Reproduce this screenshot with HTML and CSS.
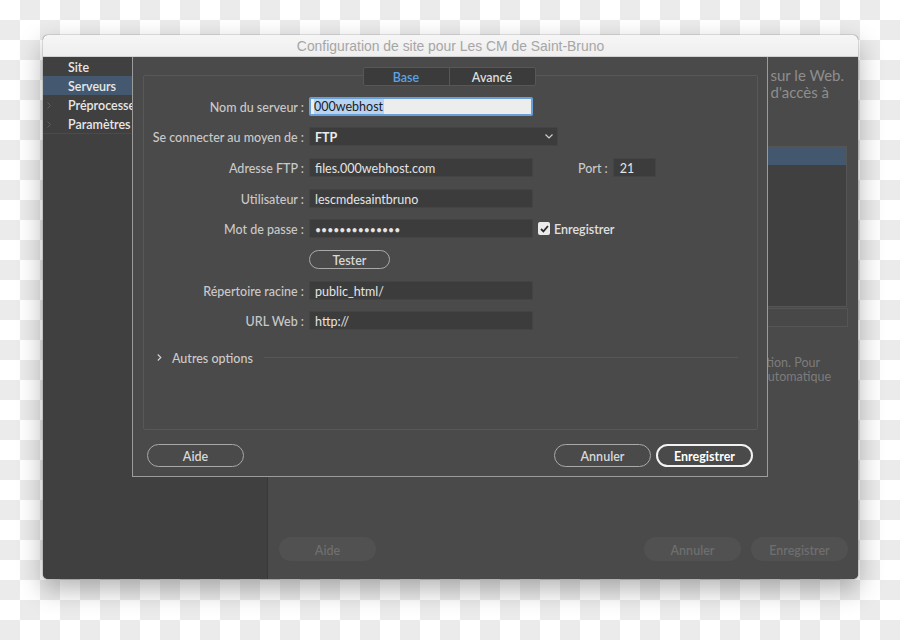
FILE: index.html
```html
<!DOCTYPE html>
<html lang="fr">
<head>
<meta charset="utf-8">
<title>Configuration de site</title>
<link rel="stylesheet" href="styles.css">
</head>
<body>
<div class="stage">
  <div class="window">
    <div class="titlebar">Configuration de site pour Les CM de Saint-Bruno</div>
    <div class="win-body">
      <aside class="cats">
        <div class="cat"><span class="chev"></span>Site</div>
        <div class="cat sel"><span class="chev"></span>Serveurs</div>
        <div class="cat"><span class="chev"><svg width="4" height="7" viewBox="0 0 4 7"><polyline points="0.5,0.5 3.5,3.5 0.5,6.5" fill="none" stroke="#5f5f5f" stroke-width="1"/></svg></span>Préprocesseurs CSS</div>
        <div class="cat last"><span class="chev"><svg width="4" height="7" viewBox="0 0 4 7"><polyline points="0.5,0.5 3.5,3.5 0.5,6.5" fill="none" stroke="#5f5f5f" stroke-width="1"/></svg></span>Paramètres</div>
      </aside>
      <section class="servers">
        <div class="intro">
          <div class="l1">qui héberge vos pages&nbsp; sur le Web.</div>
          <div class="l2">votre fournisseur&nbsp; d'accès à</div>
        </div>
        <div class="srv-list">
          <div class="srv-row sel"></div>
        </div>
        <div class="srv-tools"></div>
        <div class="note">
          <div class="n1">besoin de serveur pour la création. Pour</div>
          <div class="n2">le serveur est sélectionné automatique</div>
        </div>
        <div class="win-buttons">
          <span class="ghost-btn">Aide</span>
          <span class="spacer"></span>
          <span class="ghost-btn">Annuler</span>
          <span class="ghost-btn">Enregistrer</span>
        </div>
      </section>

      <div class="sheet">
        <div class="group">
          <div class="tabs">
            <div class="tab active">Base</div>
            <div class="tab">Avancé</div>
          </div>
          <div class="form">
            <label class="lbl">Nom du serveur :</label>
            <div class="field"><div class="input focus w224"><span class="selected">000webhost</span></div></div>

            <label class="lbl">Se connecter au moyen de :</label>
            <div class="field"><div class="input select w249"><span class="strong">FTP</span><svg class="dd" width="8" height="5" viewBox="0 0 8 5"><polyline points="0.5,0.5 4,4 7.5,0.5" fill="none" stroke="#cfcfcf" stroke-width="1.2"/></svg></div></div>

            <label class="lbl">Adresse FTP :</label>
            <div class="field"><div class="input w224">files.000webhost.com</div><span class="port-lbl">Port :</span><div class="input port">21</div></div>

            <label class="lbl">Utilisateur :</label>
            <div class="field"><div class="input w224">lescmdesaintbruno</div></div>

            <label class="lbl">Mot de passe :</label>
            <div class="field"><div class="input w224"><span class="dots">••••••••••••••</span></div><span class="check"><svg width="9" height="8" viewBox="0 0 9 8"><polyline points="1,4 3.4,6.4 8,1" fill="none" stroke="#2c2c2c" stroke-width="1.8"/></svg></span><span class="check-lbl">Enregistrer</span></div>

            <span class="lbl"></span>
            <div class="field"><span class="btn tester">Tester</span></div>

            <label class="lbl">Répertoire racine :</label>
            <div class="field"><div class="input w224">public_html/</div></div>

            <label class="lbl">URL Web :</label>
            <div class="field"><div class="input w224">http://</div></div>
          </div>
          <div class="more">
            <svg width="5" height="7" viewBox="0 0 5 7"><polyline points="0.8,0.5 3.8,3.5 0.8,6.5" fill="none" stroke="#cfcfcf" stroke-width="1.2"/></svg>
            <span class="more-lbl">Autres options</span>
            <span class="rule"></span>
          </div>
        </div>
        <div class="sheet-buttons">
          <span class="btn">Aide</span>
          <span class="spacer"></span>
          <span class="btn">Annuler</span>
          <span class="btn primary">Enregistrer</span>
        </div>
      </div>
    </div>
  </div>
</div>
</body>
</html>
```

FILE: styles.css
```css
* { box-sizing: border-box; }
html, body { margin: 0; padding: 0; }
body {
  width: 900px;
  height: 640px;
  overflow: hidden;
  background: repeating-conic-gradient(#ebebeb 0 25%, #ffffff 0 50%) 0 0 / 40px 40px;
  font-family: Lato, "Open Sans", sans-serif;
  font-size: 12.5px;
}
.stage { padding: 35px 0 0 43px; }
.window {
  width: 815px;
  height: 544px;
  border-radius: 5px;
  overflow: hidden;
  display: flex;
  flex-direction: column;
  background: #4a4a4a;
  box-shadow: 0 10px 26px rgba(0,0,0,0.30), 0 0 0 1px rgba(0,0,0,0.10);
}
.titlebar {
  flex: none;
  height: 22px;
  background: linear-gradient(#f6f6f6, #eeeeee);
  border-bottom: 1px solid #d2d2d2;
  color: #a6a6a6;
  font: 13.9px "Liberation Sans", Arial, sans-serif;
  display: flex;
  align-items: center;
  justify-content: center;
}
.win-body {
  flex: 1;
  display: flex;
  position: relative;
}

/* background categories */
.cats {
  width: 225px;
  flex: none;
  background: #404040;
  border-right: 1px solid #393939;
}
.cat {
  height: 19px;
  display: flex;
  align-items: center;
  padding: 2px 0 0 4px;
  color: #e8e8e8;
  font-weight: 600;
  white-space: nowrap;
}
.cat .chev { width: 21px; display: flex; align-items: center; }
.cat.sel { background: #44596f; }
.cat.last { border-bottom: 1px solid #4b4b4b; height: 20px; }

/* background servers panel */
.servers {
  flex: 1;
  display: flex;
  flex-direction: column;
  padding: 10px 10px 18px 11px;
  background: #4a4a4a;
}
.intro { color: #8e8e8e; font-size: 15px; line-height: 17px; white-space: nowrap; }
.intro .l1 { text-align: right; padding-right: 4px; }
.intro .l2 { text-align: right; padding-right: 19px; }
.srv-list {
  margin-top: 45px;
  height: 161px;
  background: #404040;
  border: 1px solid #555555;
  margin-right: 1px;
}
.srv-row { height: 18px; }
.srv-row.sel { background: #43586f; }
.srv-tools {
  margin-top: 1px;
  height: 19px;
  border: 1px solid #555555;
  background: #484848;
}
.note { margin-top: 29px; color: #7c7c7c; font-size: 12.5px; line-height: 14px; white-space: nowrap; }
.note .n1 { text-align: right; padding-right: 28px; }
.note .n2 { text-align: right; padding-right: 17px; }
.win-buttons { margin-top: auto; display: flex; gap: 10px; }
.spacer { flex: 1; }
.ghost-btn {
  width: 97px;
  height: 24px;
  padding-top: 2px;
  border-radius: 12px;
  background: #515151;
  color: #6e6e6e;
  font-weight: 600;
  display: flex;
  align-items: center;
  justify-content: center;
}

/* sheet dialog */
.sheet {
  position: absolute;
  left: 89px;
  top: 0;
  width: 636px;
  height: 420px;
  background: #4a4a4a;
  border: 1px solid #9c9c9c;
  border-top: none;
  padding: 18px 9px 0 10px;
  display: flex;
  flex-direction: column;
}
.group {
  height: 355px;
  flex: none;
  border: 1px solid #585858;
  border-radius: 2px;
  display: flex;
  flex-direction: column;
}
.tabs {
  align-self: center;
  margin-top: -9px;
  margin-left: -3px;
  display: flex;
  height: 19px;
  background: #3b3b3b;
  border: 1px solid #575757;
  border-radius: 2px;
}
.tab {
  width: 85px;
  padding-top: 2px;
  display: flex;
  align-items: center;
  justify-content: center;
  color: #dcdcdc;
  font-weight: 600;
}
.tab + .tab { border-left: 1px solid #575757; width: 86px; }
.tab.active { color: #5ba3e4; }

.form {
  margin-top: 10.5px;
  display: grid;
  grid-template-columns: 160px 1fr;
  grid-auto-rows: 19px;
  column-gap: 5px;
  row-gap: 11.7px;
}
.lbl {
  color: #c9c9c9;
  font-weight: 500;
  padding-top: 2px;
  text-align: right;
  display: flex;
  align-items: center;
  justify-content: flex-end;
  white-space: nowrap;
}
.field { display: flex; align-items: center; }
.input {
  height: 19px;
  background: #3c3c3c;
  border: 1px solid #444444;
  border-radius: 1px;
  color: #e4e4e4;
  padding: 2px 0 0 5px;
  display: flex;
  align-items: center;
  white-space: nowrap;
}
.w224 { width: 224px; }
.w249 { width: 249px; }
.input.focus {
  background: #ededed;
  border: 2px solid #6aa0d8;
  border-radius: 2px;
  padding: 1px 0 0 3px;
  color: #1c1c1c;
}
.selected { background: #b7d3f2; padding-right: 1px; }
.input.select { justify-content: space-between; padding-right: 4px; }
.strong { font-weight: 700; color: #ececec; }
.dd { flex: none; margin-top: -2px; }
.port-lbl { margin-left: 45px; padding-top: 2px; color: #c9c9c9; font-weight: 500; }
.input.port { width: 43px; margin-left: 5px; padding-left: 6px; }
.dots { letter-spacing: 0; font-size: 10.5px; }
.check {
  margin-left: 5px;
  width: 12px;
  height: 13px;
  border-radius: 2px;
  background: #ebebeb;
  display: flex;
  align-items: center;
  justify-content: center;
}
.check-lbl { margin-left: 4px; padding-top: 2px; color: #e0e0e0; font-weight: 600; }

.btn {
  height: 19px;
  padding-top: 2px;
  border: 1px solid #a9a9a9;
  border-radius: 12px;
  color: #d8d8d8;
  font-weight: 600;
  display: flex;
  align-items: center;
  justify-content: center;
}
.btn.tester { width: 81px; }

.more {
  margin-top: 20px;
  height: 14px;
  display: flex;
  align-items: center;
  padding-left: 13px;
  padding-right: 19px;
}
.more-lbl { margin-left: 10px; padding-top: 2px; color: #cccccc; font-weight: 500; }
.rule { flex: 1; height: 1px; background: #575757; margin-left: 11px; }

.sheet-buttons {
  margin: 14px 5px 0 4px;
  display: flex;
  gap: 5px;
}
.sheet-buttons .btn { width: 97px; height: 23px; }
.sheet-buttons .btn.primary { border: 2px solid #f2f2f2; color: #ffffff; font-weight: 700; }
```
